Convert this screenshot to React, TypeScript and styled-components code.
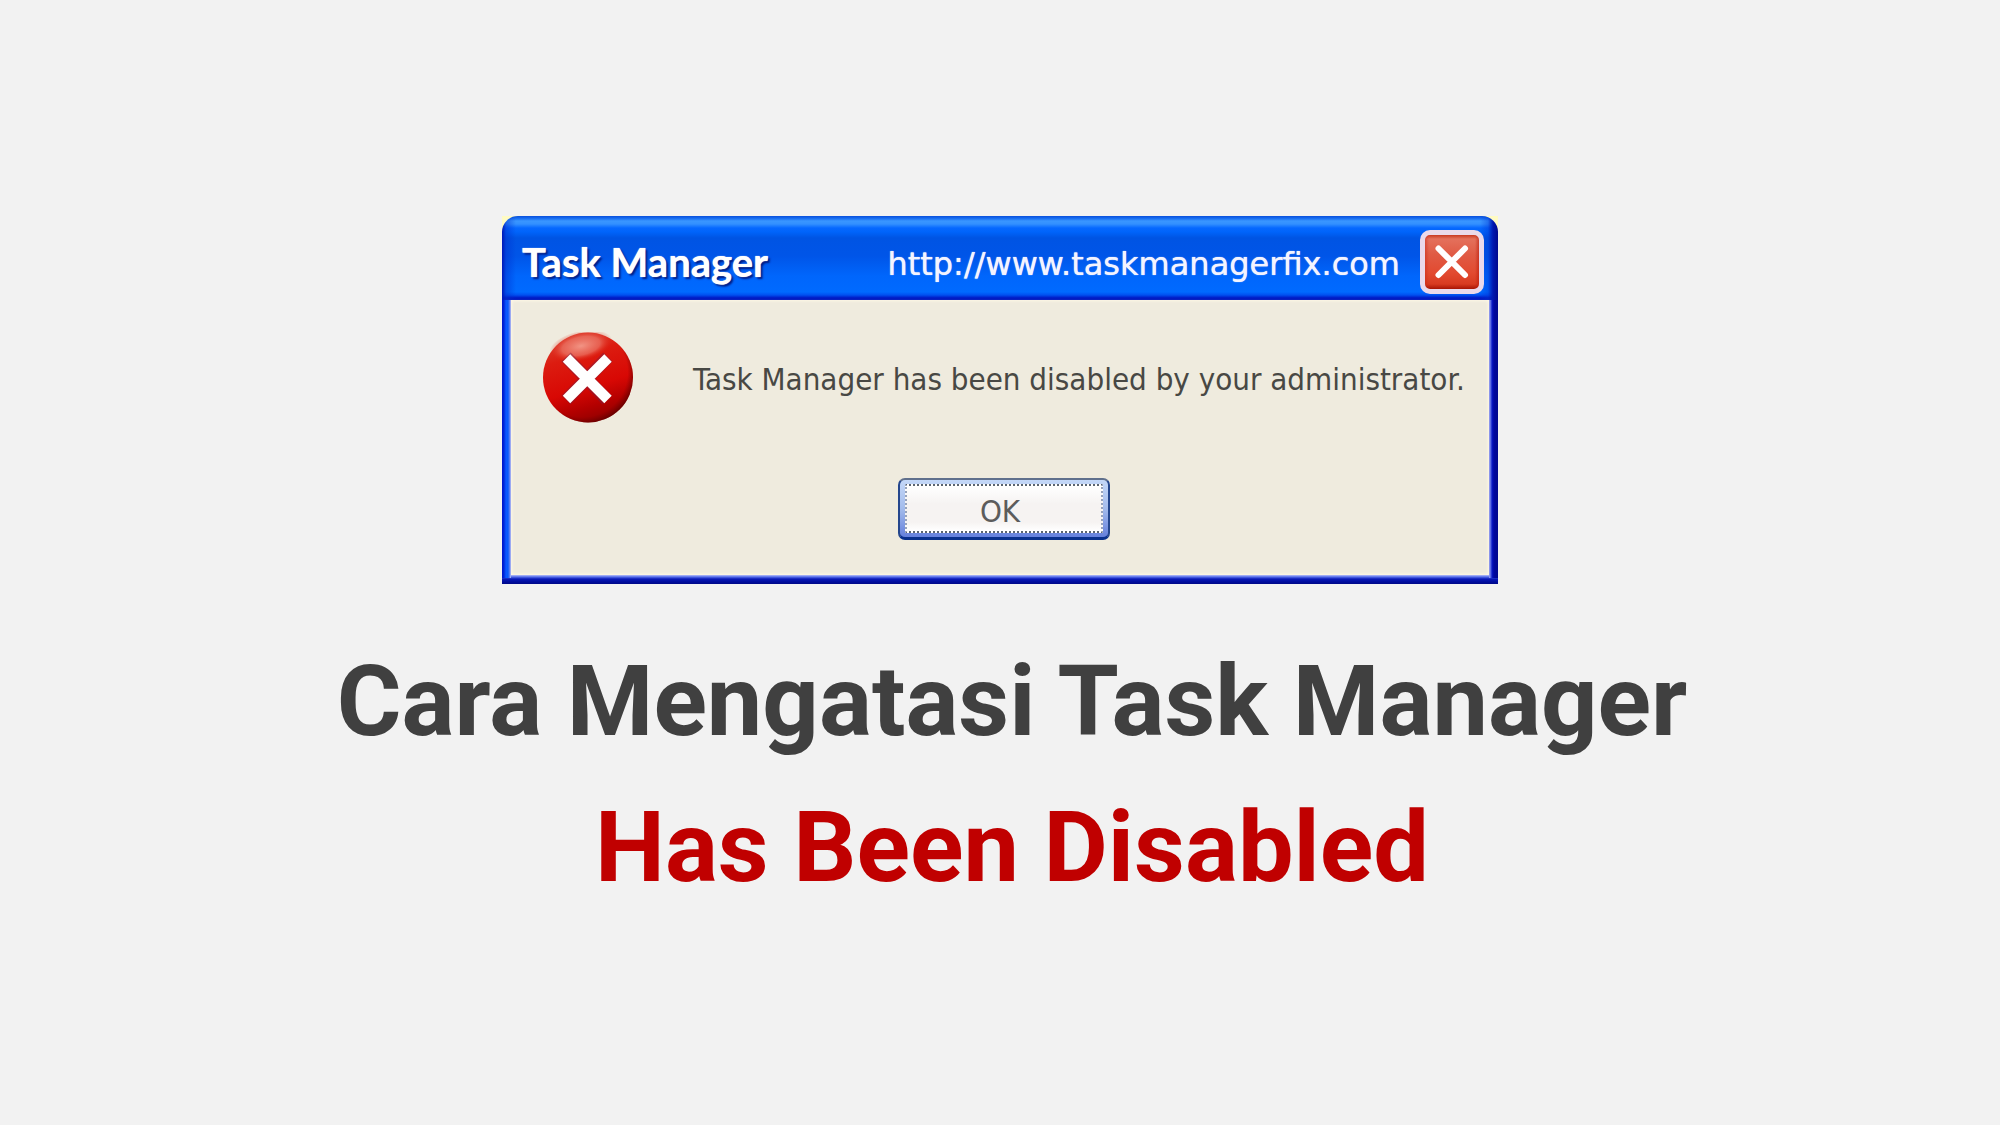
import React from "react";
import styled, { createGlobalStyle } from "styled-components";

const GlobalStyle = createGlobalStyle`
  *, *::before, *::after { box-sizing: border-box; }
  body { margin: 0; background: #f2f2f2; }
`;

const Page = styled.main`
  display: flex;
  flex-direction: column;
  align-items: center;
  gap: 44px;
  min-height: 100vh;
  padding: 216px 24px 48px;
`;

const Dialog = styled.section`
  width: 100%;
  max-width: 996px;
  background: linear-gradient(#fffbc4 0 16px, transparent 16px);
`;

const TitleBar = styled.header`
  display: flex;
  align-items: center;
  gap: 20px;
  height: 84px;
  padding: 8px 14px 0 20px;
  border-radius: 16px 16px 0 0;
  color: #fff;
  background:
    linear-gradient(90deg, #0018b8 0, #0030d080 4px, transparent 14px),
    linear-gradient(270deg, #00088c 0, #0018b0 5px, #0030d060 10px, transparent 18px),
    linear-gradient(
      #0a50dc 0, #1468ee 2px, #3a96ff 5px, #3390ff 8px, #0668ff 12px, #0064fa 16px,
      #0054e3 22px, #0055e8 40px, #0066fc 60px, #006aff 76px, #0050f0 79px,
      #0018c4 82px, #0a24c0 84px
    );
`;

const Title = styled.h2`
  flex: 1;
  margin: 0;
  font: 700 40px/48px Lato, sans-serif;
  white-space: nowrap;
  text-shadow: 0 0 1px #fff, 2px 2px 2px #001a80;
`;

const SiteLink = styled.a`
  padding-top: 4px;
  font: 400 32px/48px "DejaVu Sans", sans-serif;
  color: #f4f4ff;
  text-decoration: none;
  text-shadow: 0 0 1px #fff;
`;

const CloseButton = styled.button`
  display: grid;
  place-items: center;
  width: 64px;
  height: 64px;
  padding: 0;
  border: 5px solid #ead9ea;
  border-radius: 10px;
  background:
    linear-gradient(90deg, #c8281480 0, transparent 4px calc(100% - 4px), #b8180890 100%),
    linear-gradient(#c83820 0, #e4705c 4px, #e05a44 20px, #e24a30 38px, #d83a20 49px, #a81404 54px);
  cursor: pointer;
`;

const Frame = styled.div`
  padding: 0 9px 9px;
  background:
    linear-gradient(90deg, #0014c8 0, #0028dc 2px, #0a58ff 4px, #0858fa 6px, #7088f0 8px, #c8ccf4 9px)
      left top / 9px calc(100% - 6px) no-repeat,
    linear-gradient(270deg, #00088c 0, #0008a0 4px, #0818c4 6px, #4a5ce0 7px, #a0a8f0 9px)
      right top / 9px calc(100% - 6px) no-repeat,
    linear-gradient(#b8c0f8 0, #5068e8 2px, #0818b8 4px, #000c9c 7px, #000888 9px)
      left bottom / 100% 9px no-repeat;
`;

const Body = styled.div`
  display: flex;
  flex-direction: column;
  align-items: center;
  gap: 55px;
  padding: 32px 24px 35px 32px;
  background: #efebde;
  box-shadow: inset 0 0 3px 1px #fff8e6;
`;

const MessageRow = styled.div`
  display: flex;
  align-items: center;
  gap: 60px;
  width: 100%;
`;

const Message = styled.p`
  margin: 0;
  padding-top: 2px;
  font: 400 31px/40px "DejaVu Sans Condensed", "DejaVu Sans", sans-serif;
  color: #484844;
`;

const OkButton = styled.button`
  width: 212px;
  height: 62px;
  padding: 4px 5px;
  border: 2px solid #24468c;
  border-top-color: #60708c;
  border-bottom: 3px solid #08308c;
  border-radius: 7px;
  background: linear-gradient(#c4d8f8, #a4bcec 50%, #6480dc);
  cursor: pointer;
`;

const OkFace = styled.span`
  display: grid;
  place-items: center;
  height: 100%;
  padding: 4px 8px 0 0;
  border: 2px dotted #5a6470;
  border-inline-color: #98a4bc;
  background: linear-gradient(#fff, #f6f3f2 40%, #f6f3f2 80%, #fff);
  font: 400 31px/40px "DejaVu Sans Condensed", "DejaVu Sans", sans-serif;
  color: #5c5c5c;
`;

const Headline = styled.h1`
  margin: 0;
  padding-left: 24px;
  font: 700 99px/146px Roboto, sans-serif;
  color: #404040;
  text-align: center;
`;

const HeadlineAccent = styled.span`
  display: block;
  color: #c00000;
`;

function ErrorIcon() {
  return (
    <svg width="90" height="91" viewBox="0 0 90 91" role="img" aria-label="Error">
      <defs>
        <linearGradient id="ball" x1="0.35" y1="0" x2="0.65" y2="1">
          <stop offset="0" stopColor="#dc4030" />
          <stop offset="0.25" stopColor="#dc1c10" />
          <stop offset="0.6" stopColor="#d80804" />
          <stop offset="0.8" stopColor="#b40000" />
          <stop offset="1" stopColor="#8c0000" />
        </linearGradient>
        <radialGradient id="shine">
          <stop offset="0" stopColor="#f4a090" stopOpacity="0.9" />
          <stop offset="0.6" stopColor="#ec7868" stopOpacity="0.7" />
          <stop offset="1" stopColor="#e02010" stopOpacity="0" />
        </radialGradient>
        <radialGradient id="rim" cx="0.44" cy="0.44" r="0.58">
          <stop offset="0.86" stopColor="#700000" stopOpacity="0" />
          <stop offset="1" stopColor="#500000" stopOpacity="0.65" />
        </radialGradient>
      </defs>
      <circle cx="45" cy="45.500" r="45" fill="url(#ball)" />
      <ellipse cx="38" cy="14" rx="32" ry="15" fill="url(#shine)" transform="rotate(-12 38 14)" />
      <circle cx="45" cy="45.500" r="45" fill="url(#rim)" />
      <path d="M23 25 L64 68 M65 25 L23 68" stroke="#7a2040" strokeOpacity="0.45" strokeWidth="13" />
      <path d="M23.500 26 L65 67.500 M65 26 L23.500 67.500" stroke="#fff" strokeWidth="10.500" />
    </svg>
  );
}

function CloseIcon() {
  return (
    <svg width="36" height="36" viewBox="0 0 36 36" aria-hidden="true">
      <path d="M4.500 4.500 L31 31 M31 4.500 L4.500 31" stroke="#fff" strokeWidth="6" strokeLinecap="round" />
    </svg>
  );
}

export default function App() {
  return (
    <Page>
      <GlobalStyle />
      <Dialog role="alertdialog" aria-labelledby="dialog-title" aria-describedby="dialog-message">
        <TitleBar>
          <Title id="dialog-title">Task Manager</Title>
          <SiteLink href="http://www.taskmanagerfix.com">http://www.taskmanagerfix.com</SiteLink>
          <CloseButton type="button" aria-label="Close">
            <CloseIcon />
          </CloseButton>
        </TitleBar>
        <Frame>
          <Body>
            <MessageRow>
              <ErrorIcon />
              <Message id="dialog-message">Task Manager has been disabled by your administrator.</Message>
            </MessageRow>
            <OkButton type="button">
              <OkFace>OK</OkFace>
            </OkButton>
          </Body>
        </Frame>
      </Dialog>
      <Headline>
        Cara Mengatasi Task Manager
        <HeadlineAccent>Has Been Disabled</HeadlineAccent>
      </Headline>
    </Page>
  );
}
